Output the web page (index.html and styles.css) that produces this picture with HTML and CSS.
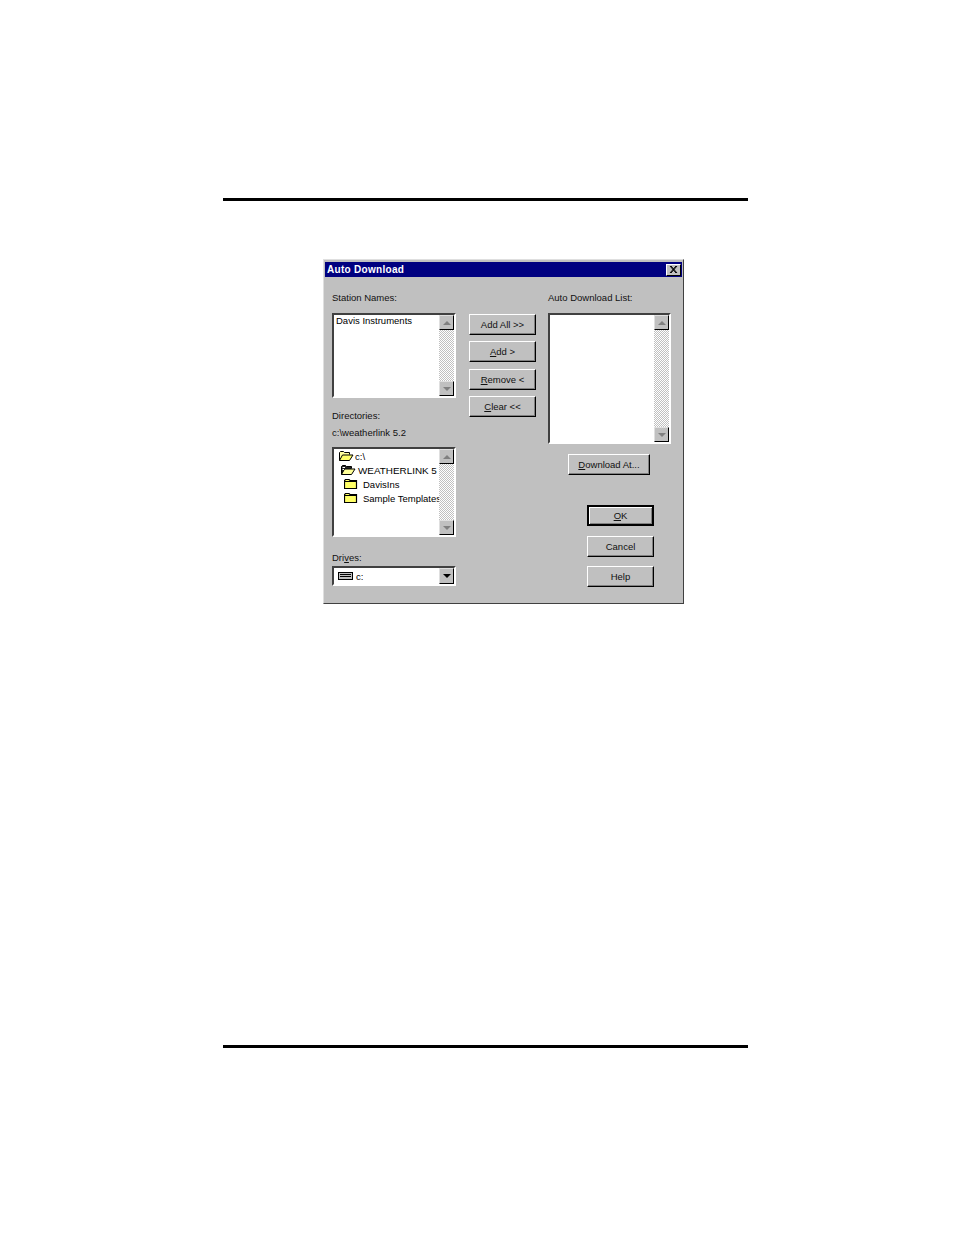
FILE: index.html
```html
<!DOCTYPE html>
<html lang="en">
<head>
<meta charset="utf-8">
<title>Auto Download</title>
<link rel="stylesheet" href="styles.css">
</head>
<body>
<div class="page">
  <div class="rule"></div>
  <div class="dialog">
    <div class="titlebar">
      <span class="title">Auto Download</span>
      <span class="close"><svg width="11" height="9" viewBox="0 0 11 9"><path d="M2 1 L8 8 M3 1 L9 8 M8 1 L2 8 M9 1 L3 8" stroke="#000" stroke-width="1" fill="none"/></svg></span>
    </div>
    <div class="body">
      <div class="col-left">
        <div class="label l-station">Station Names:</div>
        <div class="listbox lb-station">
          <div class="items"><div class="item station-item">Davis Instruments</div></div>
          <div class="scrollbar">
            <span class="arrow"><i class="up"></i></span>
            <span class="track"></span>
            <span class="arrow"><i class="down"></i></span>
          </div>
        </div>
        <div class="label l-dir">Directories:</div>
        <div class="label l-path">c:\weatherlink 5.2</div>
        <div class="listbox lb-dir">
          <div class="items tree">
            <div class="row r0">
              <svg class="ico" width="16" height="12" viewBox="0 0 16 12"><path d="M1.5 10.5 V2.5 L2.5 1.5 H5.5 L6.5 2.5 H11.5 V4.5" fill="#ffff9c" stroke="#000"/><path d="M1.5 10.5 L4.5 5 H15 L11.5 10.5 Z" fill="#ffff66" stroke="#000"/></svg>
              <span>c:\</span>
            </div>
            <div class="row r1">
              <svg class="ico" width="16" height="12" viewBox="0 0 16 12"><path d="M1.5 10.5 V2.5 L2.5 1.5 H5.5 L6.5 2.5 H11.5 V4.5" fill="#222" stroke="#000"/><path d="M1.5 10.5 L4.5 5 H15 L11.5 10.5 Z" fill="#ffff99" stroke="#000"/><path d="M2.5 3.5 H5 M2.5 5.5 H4" stroke="#fff" stroke-width="1"/></svg>
              <span class="wl">WEATHERLINK 5</span>
            </div>
            <div class="row r2">
              <svg class="ico" width="14" height="12" viewBox="0 0 14 12"><path d="M0.5 10.5 V2.5 L1.5 1.5 H5 L6 2.5 H12.5 V10.5 Z" fill="#ffff66" stroke="#000" stroke-width="1.2"/><path d="M1 3.5 H12" stroke="#000"/></svg>
              <span>DavisIns</span>
            </div>
            <div class="row r2">
              <svg class="ico" width="14" height="12" viewBox="0 0 14 12"><path d="M0.5 10.5 V2.5 L1.5 1.5 H5 L6 2.5 H12.5 V10.5 Z" fill="#ffff66" stroke="#000" stroke-width="1.2"/><path d="M1 3.5 H12" stroke="#000"/></svg>
              <span>Sample Templates</span>
            </div>
          </div>
          <div class="scrollbar">
            <span class="arrow"><i class="up"></i></span>
            <span class="track"></span>
            <span class="arrow"><i class="down"></i></span>
          </div>
        </div>
        <div class="label l-drives">Dri<u>v</u>es:</div>
        <div class="combo">
          <div class="combo-value">
            <svg class="ico" width="15" height="8" viewBox="0 0 15 8"><rect x="0.5" y="0.5" width="14" height="7" fill="#c0c0c0" stroke="#000"/><path d="M2 2.5 H13 M2 4.5 H13" stroke="#000"/></svg>
            <span>c:</span>
          </div>
          <span class="arrow combo-arrow"><i class="down dark"></i></span>
        </div>
      </div>
      <div class="col-mid">
        <button class="btn">Add All &gt;&gt;</button>
        <button class="btn"><u>A</u>dd &gt;</button>
        <button class="btn"><u>R</u>emove &lt;</button>
        <button class="btn"><u>C</u>lear &lt;&lt;</button>
      </div>
      <div class="col-right">
        <div class="label l-station">Auto Download List:</div>
        <div class="listbox lb-auto">
          <div class="items"></div>
          <div class="scrollbar">
            <span class="arrow"><i class="up"></i></span>
            <span class="track"></span>
            <span class="arrow"><i class="down"></i></span>
          </div>
        </div>
        <button class="btn btn-at"><u>D</u>ownload At...</button>
        <button class="btn btn-side btn-ok"><u>O</u>K</button>
        <button class="btn btn-side btn-cancel">Cancel</button>
        <button class="btn btn-side btn-help">Help</button>
      </div>
    </div>
  </div>
  <div class="rule rule-bottom"></div>
</div>
</body>
</html>
```
FILE: styles.css
```css
* { box-sizing: border-box; }
html, body { margin: 0; padding: 0; background: #fff; }
body { font-family: "Liberation Sans", Arial, sans-serif; font-size: 9.5px; color: #000; }
.page { width: 954px; height: 1235px; padding: 198px 206px 0 223px; overflow: hidden; }
.rule { width: 525px; height: 3px; background: #000; }
.rule-bottom { margin-top: 441px; }

.dialog {
  width: 361px; height: 345px; margin: 58px 0 0 100px;
  background: #c0c0c0;
  border: 1px solid; border-color: #dfdfdf #404040 #404040 #dfdfdf;
  padding: 2px 1px 1px 1px;
}
.titlebar {
  height: 15px; background: #000080; display: flex; align-items: center;
  justify-content: space-between; padding: 0 1px 0 2px;
}
.title { color: #fff; font-weight: bold; font-size: 10px; letter-spacing: 0.3px; }
.close {
  width: 15px; height: 12px; background: #c0c0c0; display: flex; align-items: center; justify-content: center;
  border: 1px solid; border-color: #fff #000 #000 #fff;
}
.body { display: flex; padding: 14px 0 0 7px; }
.col-left { width: 124px; display: flex; flex-direction: column; }
.col-mid { width: 67px; margin: 23px 0 0 13px; display: flex; flex-direction: column; gap: 6.4px; }
.col-right { width: 123px; margin-left: 12px; display: flex; flex-direction: column; }

.label { height: 12px; line-height: 12px; white-space: nowrap; color: #111; }
.l-station { margin-top: 1px; }
.l-dir { margin-top: 12px; }
.l-path { margin-top: 5px; }
.l-drives { margin-top: 15px; height: 14px; }

.listbox {
  display: flex; background: #fff;
  border: 2px solid; border-color: #404040 #fff #fff #404040;
}
.lb-station { width: 124px; height: 85px; margin-top: 9px; }
.lb-dir { width: 124px; height: 90px; margin-top: 8px; }
.lb-auto { width: 123px; height: 131px; margin-top: 9px; }
.items { flex: 1; min-width: 0; background: #fff; }
.station-item { padding: 0 0 0 2px; line-height: 12px; white-space: nowrap; }

.scrollbar { width: 15px; display: flex; flex-direction: column; flex: none; }
.track {
  flex: 1;
  background-color: #fff;
  background-image: repeating-conic-gradient(#c0c0c0 0 25%, #fff 0 50%);
  background-size: 2px 2px;
}
.arrow {
  width: 15px; height: 15px; flex: none; background: #c0c0c0;
  border: 1px solid; border-color: #dfdfdf #000 #000 #dfdfdf;
  display: flex; align-items: center; justify-content: center;
}
.arrow i { display: block; width: 0; height: 0; border-left: 4px solid transparent; border-right: 4px solid transparent; }
.arrow .up { border-bottom: 4px solid #808080; }
.arrow .down { border-top: 4px solid #808080; }
.arrow .down.dark { border-top-color: #000; }

.tree { padding-top: 0; }
.row { display: flex; align-items: center; height: 14px; white-space: nowrap; }
.row .ico { flex: none; }
.r0 { padding-left: 4px; gap: 1px; }
.r1 { padding-left: 6px; gap: 2px; font-size: 9.9px; }
.r2 { padding-left: 10px; gap: 5px; }

.combo {
  width: 124px; height: 20px; display: flex; background: #fff;
  border: 2px solid; border-color: #404040 #fff #fff #404040;
}
.combo-value { flex: 1; display: flex; align-items: center; gap: 3px; padding-left: 4px; }
.combo-arrow { height: 16px; }

.btn {
  display: block; padding: 0; margin: 0; width: 67px; height: 21px;
  font: 9.5px "Liberation Sans", Arial, sans-serif; color: #111;
  background: #c0c0c0; text-align: center; white-space: nowrap;
  border: 1px solid; border-color: #fff #000 #000 #fff;
  box-shadow: inset -1px -1px 0 #808080;
}
.btn-at { width: 82px; margin: 10px 0 0 20px; }
.btn-side { margin-left: 39px; }
.btn-ok {
  margin-top: 30px; border: 2px solid #000;
  box-shadow: inset 1px 1px 0 #fff, inset -1px -1px 0 #808080;
}
.btn-cancel { margin-top: 10px; }
.btn-help { margin-top: 9px; }
```
